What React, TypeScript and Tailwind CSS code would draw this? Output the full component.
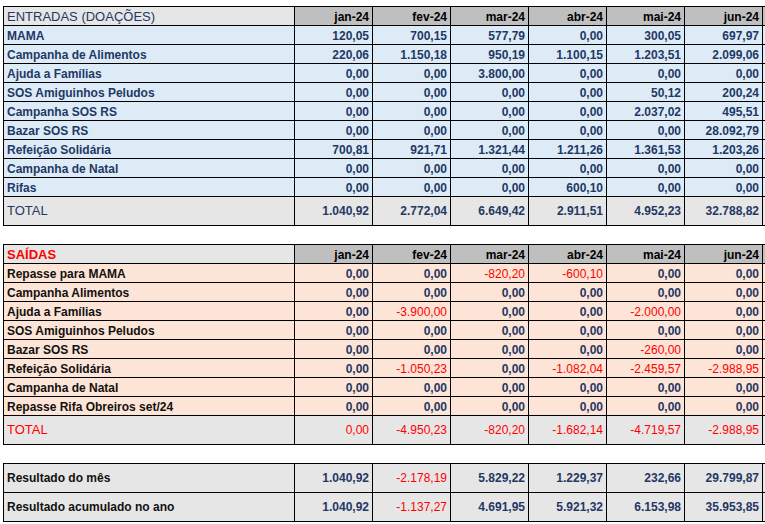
import React from 'react';

const MONTHS = ['jan-24', 'fev-24', 'mar-24', 'abr-24', 'mai-24', 'jun-24'];

type Row = { label: string; values: string[] };

const entradas: Row[] = [
  { label: 'MAMA', values: ['120,05', '700,15', '577,79', '0,00', '300,05', '697,97'] },
  { label: 'Campanha de Alimentos', values: ['220,06', '1.150,18', '950,19', '1.100,15', '1.203,51', '2.099,06'] },
  { label: 'Ajuda a Famílias', values: ['0,00', '0,00', '3.800,00', '0,00', '0,00', '0,00'] },
  { label: 'SOS Amiguinhos Peludos', values: ['0,00', '0,00', '0,00', '0,00', '50,12', '200,24'] },
  { label: 'Campanha SOS RS', values: ['0,00', '0,00', '0,00', '0,00', '2.037,02', '495,51'] },
  { label: 'Bazar SOS RS', values: ['0,00', '0,00', '0,00', '0,00', '0,00', '28.092,79'] },
  { label: 'Refeição Solidária', values: ['700,81', '921,71', '1.321,44', '1.211,26', '1.361,53', '1.203,26'] },
  { label: 'Campanha de Natal', values: ['0,00', '0,00', '0,00', '0,00', '0,00', '0,00'] },
  { label: 'Rifas', values: ['0,00', '0,00', '0,00', '600,10', '0,00', '0,00'] },
];
const totalEntradas = ['1.040,92', '2.772,04', '6.649,42', '2.911,51', '4.952,23', '32.788,82'];

const saidas: Row[] = [
  { label: 'Repasse para MAMA', values: ['0,00', '0,00', '-820,20', '-600,10', '0,00', '0,00'] },
  { label: 'Campanha Alimentos', values: ['0,00', '0,00', '0,00', '0,00', '0,00', '0,00'] },
  { label: 'Ajuda a Famílias', values: ['0,00', '-3.900,00', '0,00', '0,00', '-2.000,00', '0,00'] },
  { label: 'SOS Amiguinhos Peludos', values: ['0,00', '0,00', '0,00', '0,00', '0,00', '0,00'] },
  { label: 'Bazar SOS RS', values: ['0,00', '0,00', '0,00', '0,00', '-260,00', '0,00'] },
  { label: 'Refeição Solidária', values: ['0,00', '-1.050,23', '0,00', '-1.082,04', '-2.459,57', '-2.988,95'] },
  { label: 'Campanha de Natal', values: ['0,00', '0,00', '0,00', '0,00', '0,00', '0,00'] },
  { label: 'Repasse Rifa Obreiros set/24', values: ['0,00', '0,00', '0,00', '0,00', '0,00', '0,00'] },
];
const totalSaidas = ['0,00', '-4.950,23', '-820,20', '-1.682,14', '-4.719,57', '-2.988,95'];

const resultados: Row[] = [
  { label: 'Resultado do mês', values: ['1.040,92', '-2.178,19', '5.829,22', '1.229,37', '232,66', '29.799,87'] },
  { label: 'Resultado acumulado no ano', values: ['1.040,92', '-1.137,27', '4.691,95', '5.921,32', '6.153,98', '35.953,85'] },
];

// spreadsheet cells: right + bottom border, the grid supplies left + top
const cell = 'border-r border-b border-black flex items-center overflow-hidden whitespace-nowrap';
const numCell = `${cell} justify-end pr-[3px] text-[12px]`;

function Num({ value, bg, tall, forceRed }: { value: string; bg: string; tall?: boolean; forceRed?: boolean }) {
  const red = forceRed || value.startsWith('-');
  return (
    <div className={`${numCell} ${bg} ${tall ? 'h-[29px]' : 'h-[19px] pt-px'} ${red ? 'text-[#ff0000] font-normal' : 'text-[#1f3864] font-bold'}`}>
      {value}
    </div>
  );
}

function Header({ title, titleClass }: { title: string; titleClass: string }) {
  return (
    <>
      <div className={`${cell} h-[19px] pt-px bg-[#e7e6e6] pl-[3px] text-[13px] ${titleClass}`}>{title}</div>
      {MONTHS.map((m) => (
        <div key={m} className={`${numCell} h-[19px] pt-px bg-[#bfbfbf] font-bold text-black`}>
          {m}
        </div>
      ))}
      <div className={`${cell} h-[19px] bg-[#bfbfbf]`} />
    </>
  );
}

function Body({ rows, bg, labelColor }: { rows: Row[]; bg: string; labelColor: string }) {
  return (
    <>
      {rows.map((r) => (
        <React.Fragment key={r.label}>
          <div className={`${cell} h-[19px] pt-px ${bg} pl-[3px] text-[12px] font-bold ${labelColor}`}>{r.label}</div>
          {r.values.map((v, i) => (
            <Num key={i} value={v} bg={bg} />
          ))}
          <div className={`${cell} h-[19px] ${bg}`} />
        </React.Fragment>
      ))}
    </>
  );
}

function TotalRow({ label, labelClass, values, forceRed }: { label: string; labelClass: string; values: string[]; forceRed?: boolean }) {
  return (
    <>
      <div className={`${cell} h-[29px] bg-[#e7e6e6] pl-[3px] ${labelClass}`}>{label}</div>
      {values.map((v, i) => (
        <Num key={i} value={v} bg="bg-[#e7e6e6]" tall forceRed={forceRed} />
      ))}
      <div className={`${cell} h-[29px] bg-[#e7e6e6]`} />
    </>
  );
}

const grid = 'grid grid-cols-[291px_repeat(7,78px)] w-max border-l border-t border-black ml-[3px]';

export default function App() {
  return (
    <div className="w-[765px] h-[524px] overflow-hidden bg-white font-['Liberation_Sans',Arial,sans-serif] pt-[6px]">
      {/* Entradas */}
      <div className={grid}>
        <Header title="ENTRADAS (DOAÇÕES)" titleClass="text-[#1f3864]" />
        <Body rows={entradas} bg="bg-[#ddebf7]" labelColor="text-[#1f3864]" />
        <TotalRow label="TOTAL" labelClass="text-[13px] text-[#1f3864]" values={totalEntradas} />
      </div>

      {/* Saídas */}
      <div className={`${grid} mt-[18px]`}>
        <Header title="SAÍDAS" titleClass="text-[#ff0000] font-bold" />
        <Body rows={saidas} bg="bg-[#fce4d6]" labelColor="text-[#111111]" />
        <TotalRow label="TOTAL" labelClass="text-[13px] text-[#ff0000]" values={totalSaidas} forceRed />
      </div>

      {/* Resultado */}
      <div className={`${grid} mt-[18px]`}>
        {resultados.map((r) => (
          <TotalRow key={r.label} label={r.label} labelClass="text-[12px] font-bold text-[#111111]" values={r.values} />
        ))}
      </div>
    </div>
  );
}
